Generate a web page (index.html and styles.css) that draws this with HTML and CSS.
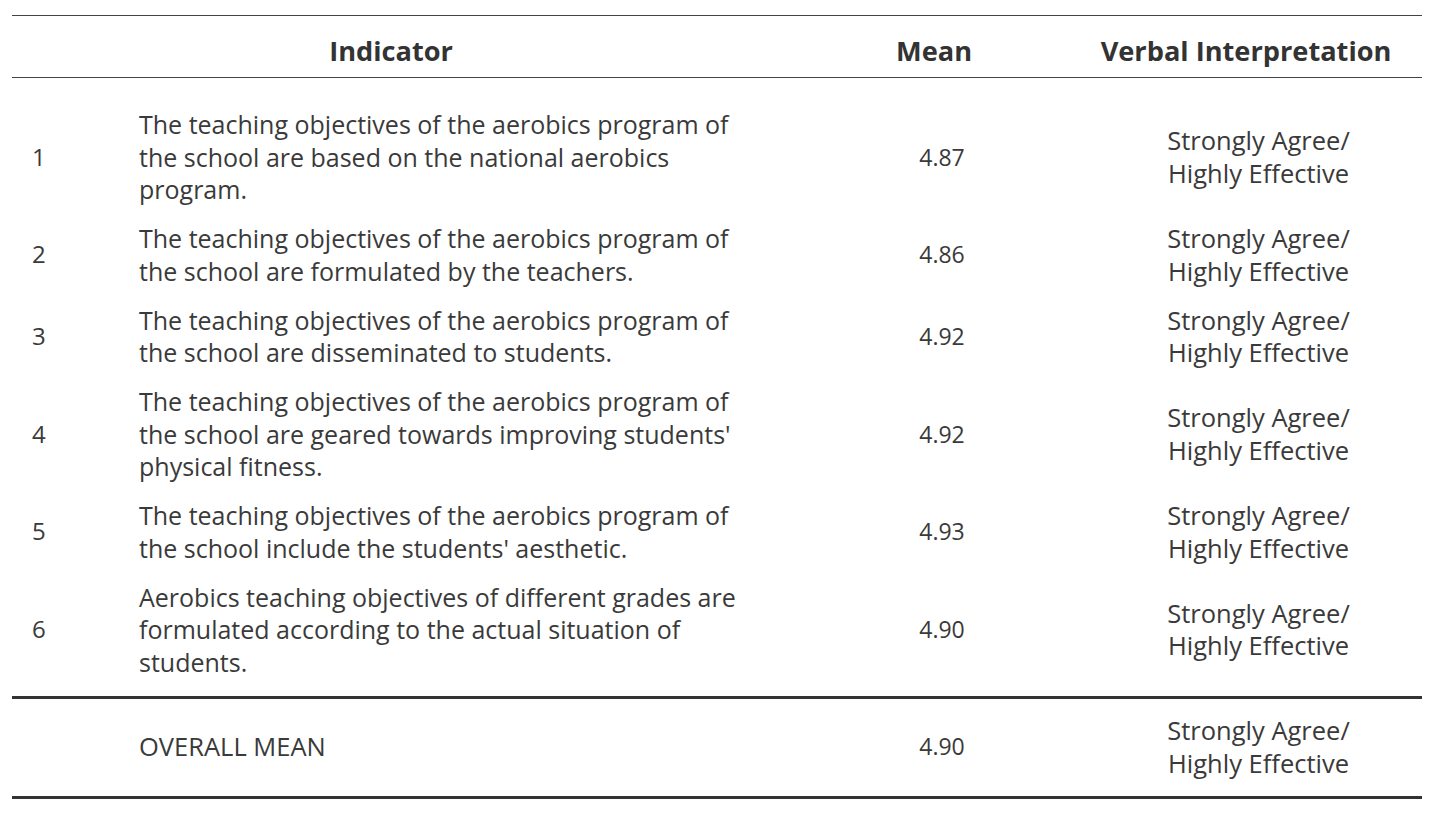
FILE: index.html
```html
<!DOCTYPE html>
<html lang="en">
<head>
<meta charset="utf-8">
<title>Table</title>
<link rel="stylesheet" href="styles.css">
</head>
<body>
<table class="data">
  <colgroup>
    <col class="c-num">
    <col class="c-ind">
    <col class="c-mean">
    <col class="c-verb">
  </colgroup>
  <thead>
    <tr>
      <th colspan="2" class="h-ind">Indicator</th>
      <th class="h-mean">Mean</th>
      <th class="h-verb">Verbal Interpretation</th>
    </tr>
  </thead>
  <tbody>
    <tr class="first">
      <td class="num">1</td>
      <td class="ind">The teaching objectives of the aerobics program of the school are based on the national aerobics program.</td>
      <td class="mean">4.87</td>
      <td class="verb">Strongly Agree/<br>Highly Effective</td>
    </tr>
    <tr>
      <td class="num">2</td>
      <td class="ind">The teaching objectives of the aerobics program of the school are formulated by the teachers.</td>
      <td class="mean">4.86</td>
      <td class="verb">Strongly Agree/<br>Highly Effective</td>
    </tr>
    <tr>
      <td class="num">3</td>
      <td class="ind">The teaching objectives of the aerobics program of the school are disseminated to students.</td>
      <td class="mean">4.92</td>
      <td class="verb">Strongly Agree/<br>Highly Effective</td>
    </tr>
    <tr>
      <td class="num">4</td>
      <td class="ind">The teaching objectives of the aerobics program of the school are geared towards improving students' physical fitness.</td>
      <td class="mean">4.92</td>
      <td class="verb">Strongly Agree/<br>Highly Effective</td>
    </tr>
    <tr>
      <td class="num">5</td>
      <td class="ind">The teaching objectives of the aerobics program of the school include the students' aesthetic.</td>
      <td class="mean">4.93</td>
      <td class="verb">Strongly Agree/<br>Highly Effective</td>
    </tr>
    <tr class="last">
      <td class="num">6</td>
      <td class="ind">Aerobics teaching objectives of different grades are formulated according to the actual situation of students.</td>
      <td class="mean">4.90</td>
      <td class="verb">Strongly Agree/<br>Highly Effective</td>
    </tr>
  </tbody>
  <tfoot>
    <tr>
      <td class="num"></td>
      <td class="ind">OVERALL MEAN</td>
      <td class="mean">4.90</td>
      <td class="verb">Strongly Agree/<br>Highly Effective</td>
    </tr>
  </tfoot>
</table>
</body>
</html>
```

FILE: styles.css
```css
html, body {
  margin: 0;
  padding: 0;
  background: #ffffff;
}

body {
  padding: 15px 18px 0 12px;
  font-family: "Open Sans", "Noto Sans", sans-serif;
  font-size: 25.5px;
  line-height: 32.5px;
  color: #3a3a3a;
}

.data {
  width: 1410px;
  border-collapse: collapse;
  table-layout: fixed;
}

.c-num { width: 107px; }
.c-ind { width: 651px; }
.c-mean { width: 328px; }
.c-verb { width: 324px; }

.data th {
  font-weight: 700;
  color: #333333;
  font-size: 27.2px;
  line-height: 33px;
  padding: 18px 0 10px;
  border-top: 1.5px solid #444444;
  border-bottom: 1.5px solid #444444;
  text-align: center;
  white-space: nowrap;
}

.data th.h-verb { padding-right: 28px; }

.data td {
  padding: 8.25px 0;
  vertical-align: middle;
}

.data tr.first td { padding-top: 30px; }
.data tr.last td { padding-bottom: 18px; }

.data td.num {
  padding-left: 20px;
  font-size: 24px;
}

.data td.ind {
  padding-left: 20px;
  padding-right: 22px;
  font-size: 25px;
}

.data tfoot td.ind {
  font-size: 25.5px;
}

.data td.mean {
  text-align: center;
  padding-left: 16px;
  font-size: 23px;
}

.data td.verb {
  text-align: center;
  padding-right: 3px;
  white-space: nowrap;
}

.data tfoot td {
  border-top: 3px solid #333333;
  border-bottom: 3px solid #333333;
  padding-top: 15px;
  padding-bottom: 17px;
}
```
